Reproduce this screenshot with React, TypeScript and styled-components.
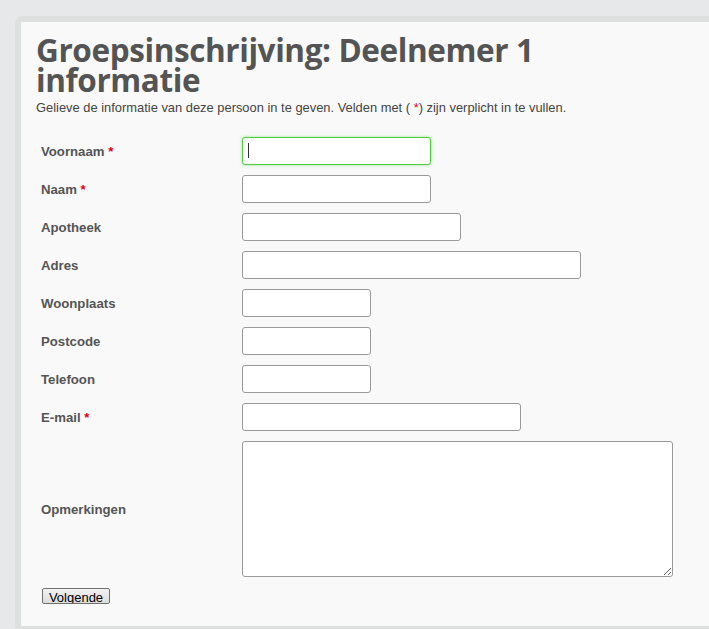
import React from 'react';
import styled, { createGlobalStyle, css } from 'styled-components';

const GlobalStyle = createGlobalStyle`
	html, body {
		margin: 0;
		padding: 0;
		background: #e7e8e9;
		overflow: hidden;
	}
	body {
		font-family: 'Liberation Sans', Arial, sans-serif;
	}
`;

const Panel = styled.div`
	margin: 16px 0 0 15px;
	width: 760px;
	border: 6px solid #dedfdf;
	border-right: none;
	border-radius: 7px 0 0 7px;
	background: #f9f9f9;
	padding: 13px 0 20px 15px;
	box-sizing: border-box;
	height: 616px;
`;

const Title = styled.h1`
	margin: 0;
	font-family: 'Open Sans', 'Noto Sans', sans-serif;
	font-weight: 700;
	font-size: 31.5px;
	line-height: 30px;
	letter-spacing: -0.4px;
	color: #545454;
	width: 520px;
`;

const Intro = styled.p`
	margin: 5px 0 22px;
	font-size: 12.9px;
	line-height: 15px;
	color: #444;
`;

const Star = styled.span`
	color: #e0001a;
`;

const Form = styled.form`
	display: flex;
	flex-direction: column;
	gap: 10px;
	padding-left: 5px;
`;

const Row = styled.div`
	display: flex;
	align-items: center;
`;

const Label = styled.label`
	width: 201px;
	font-size: 13.2px;
	font-weight: 700;
	color: #555;
	flex-shrink: 0;
`;

const Field = styled.div`
	position: relative;
	display: flex;
`;

const Input = styled.input<{ $w: number; $focused?: boolean }>`
	width: ${(p) => p.$w}px;
	height: 28px;
	box-sizing: border-box;
	border: 1px solid #999;
	border-radius: 3px;
	background: #fff;
	outline: none;
	padding: 0 5px;
	font-size: 13px;
	${(p) =>
		p.$focused &&
		css`
			border-color: #4fcf3f;
			box-shadow: 0 0 3px rgba(80, 210, 60, 0.6);
		`}
`;

const Caret = styled.span`
	position: absolute;
	left: 6px;
	top: 6px;
	width: 1px;
	height: 15px;
	background: #333;
`;

const TextArea = styled.textarea`
	width: 431px;
	height: 136px;
	box-sizing: border-box;
	border: 1px solid #999;
	border-radius: 3px;
	background: #fff;
	outline: none;
	resize: both;
`;

const Button = styled.button`
	margin: 11px 0 0 6px;
	width: 68px;
	height: 16px;
	padding: 0;
	border: 1px solid #707070;
	border-radius: 2px;
	background: linear-gradient(#f2f2f2, #dcdcdc);
	font-family: 'Liberation Sans', Arial, sans-serif;
	font-size: 13px;
	line-height: 18px;
	color: #000;
	overflow: hidden;
	align-self: flex-start;
`;

const fields: { label: string; w: number; req?: boolean }[] = [
	{ label: 'Voornaam', w: 189, req: true },
	{ label: 'Naam', w: 189, req: true },
	{ label: 'Apotheek', w: 219 },
	{ label: 'Adres', w: 339 },
	{ label: 'Woonplaats', w: 129 },
	{ label: 'Postcode', w: 129 },
	{ label: 'Telefoon', w: 129 },
	{ label: 'E-mail', w: 279, req: true },
];

const App = (): JSX.Element => {
	return (
		<>
			<GlobalStyle />
			<Panel>
				<Title>Groepsinschrijving: Deelnemer 1 informatie</Title>
				<Intro>
					Gelieve de informatie van deze persoon in te geven. Velden met ( <Star>*</Star>) zijn verplicht in
					te vullen.
				</Intro>
				<Form onSubmit={(e): void => e.preventDefault()}>
					{fields.map((f, i) => (
						<Row key={f.label}>
							<Label>
								{f.label}
								{f.req && <Star> *</Star>}
							</Label>
							<Field>
								<Input type="text" $w={f.w} $focused={i === 0} />
								{i === 0 && <Caret />}
							</Field>
						</Row>
					))}
					<Row>
						<Label>Opmerkingen</Label>
						<TextArea />
					</Row>
				</Form>
				<Button type="button">Volgende</Button>
			</Panel>
		</>
	);
};

export default App;
